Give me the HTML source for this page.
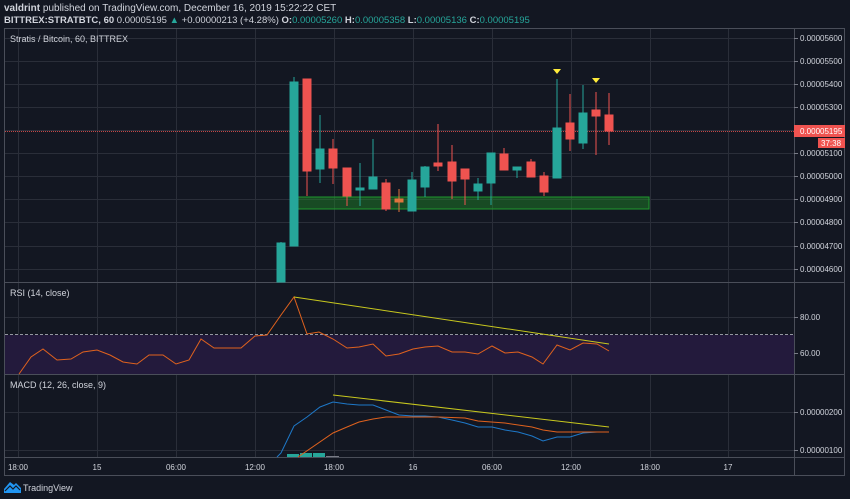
<!DOCTYPE html>
<html><head><meta charset="utf-8"><style>
html,body{margin:0;padding:0;background:#131722;width:850px;height:499px;overflow:hidden}
svg{display:block}
text{font-family:"Liberation Sans","DejaVu Sans",sans-serif}
</style></head><body>
<svg width="850" height="499" viewBox="0 0 850 499" xmlns="http://www.w3.org/2000/svg">
<rect width="850" height="499" fill="#131722"/>
<text x="4" y="11" font-size="10" fill="#d1d4dc"><tspan font-weight="bold">valdrint</tspan> published on TradingView.com, December 16, 2019 15:22:22 CET</text>
<text x="4" y="23" font-size="9.5" fill="#d1d4dc"><tspan font-weight="bold">BITTREX:STRATBTC, 60</tspan>  0.00005195 <tspan fill="#26a69a">▲</tspan> +0.00000213 (+4.28%) <tspan font-weight="bold">O:</tspan><tspan fill="#26a69a">0.00005260</tspan> <tspan font-weight="bold">H:</tspan><tspan fill="#26a69a">0.00005358</tspan> <tspan font-weight="bold">L:</tspan><tspan fill="#26a69a">0.00005136</tspan> <tspan font-weight="bold">C:</tspan><tspan fill="#26a69a">0.00005195</tspan></text>
<g stroke="#2a2e39" stroke-width="1">
<path d="M18.5 28V457M97.5 28V457M176.5 28V457M255.5 28V457M334.5 28V457M413.5 28V457M492.5 28V457M571.5 28V457M650.5 28V457M728.5 28V457"/>
<path d="M5 38.5H794M5 61.5H794M5 84.5H794M5 107.5H794M5 130.5H794M5 153.5H794M5 176.5H794M5 199.5H794M5 222.5H794M5 246.5H794M5 269.5H794"/>
<path d="M5 317.5H794M5 353.5H794M5 412.5H794M5 450.5H794"/>
</g>
<rect x="5" y="335" width="789" height="39" fill="#231a3c"/>
<path d="M5 334.5H794" stroke="#9598a1" stroke-dasharray="3 2" stroke-width="1"/>
<g stroke="#4a4e59" stroke-width="1" fill="none">
<rect x="4.5" y="28.5" width="840" height="447"/>
<path d="M794.5 28V475M5 282.5H845M5 374.5H845M5 457.5H845"/>
</g>
<rect x="294" y="197" width="355" height="12" fill="rgba(30,140,40,0.45)" stroke="#1f9a2e" stroke-width="1"/>
<path d="M5 131.5H794" stroke="#ef5350" stroke-dasharray="1 1" stroke-width="1" opacity="0.8"/>
<g stroke-width="1">
<g fill="#26a69a" stroke="#26a69a">
<line x1="281" y1="242" x2="281" y2="282"/><rect x="277" y="243" width="8" height="39"/>
<line x1="294" y1="77" x2="294" y2="246"/><rect x="290" y="82" width="8" height="164"/>
<line x1="320" y1="115" x2="320" y2="183"/><rect x="316" y="149" width="8" height="20"/>
<line x1="360" y1="163" x2="360" y2="206"/><rect x="356" y="188" width="8" height="2"/>
<line x1="373" y1="139" x2="373" y2="189"/><rect x="369" y="177" width="8" height="12"/>
<line x1="412" y1="172" x2="412" y2="211"/><rect x="408" y="180" width="8" height="31"/>
<line x1="425" y1="166" x2="425" y2="197"/><rect x="421" y="167" width="8" height="20"/>
<line x1="478" y1="178" x2="478" y2="200"/><rect x="474" y="184" width="8" height="7"/>
<line x1="491" y1="153" x2="491" y2="205"/><rect x="487" y="153" width="8" height="30"/>
<line x1="517" y1="167" x2="517" y2="178"/><rect x="513" y="167" width="8" height="3"/>
<line x1="557" y1="79" x2="557" y2="178"/><rect x="553" y="128" width="8" height="50"/>
<line x1="583" y1="85" x2="583" y2="149"/><rect x="579" y="113" width="8" height="30"/>
</g>
<g fill="#ef5350" stroke="#ef5350">
<line x1="307" y1="79" x2="307" y2="196"/><rect x="303" y="79" width="8" height="92"/>
<line x1="333" y1="139" x2="333" y2="184"/><rect x="329" y="149" width="8" height="19"/>
<line x1="347" y1="168" x2="347" y2="206"/><rect x="343" y="168" width="8" height="28"/>
<line x1="386" y1="179" x2="386" y2="211"/><rect x="382" y="183" width="8" height="26"/>
<line x1="438" y1="124" x2="438" y2="171"/><rect x="434" y="163" width="8" height="3"/>
<line x1="452" y1="145" x2="452" y2="199"/><rect x="448" y="162" width="8" height="19"/>
<line x1="465" y1="169" x2="465" y2="205"/><rect x="461" y="169" width="8" height="10"/>
<line x1="504" y1="148" x2="504" y2="170"/><rect x="500" y="154" width="8" height="16"/>
<line x1="531" y1="159" x2="531" y2="177"/><rect x="527" y="162" width="8" height="15"/>
<line x1="544" y1="172" x2="544" y2="196"/><rect x="540" y="176" width="8" height="16"/>
<line x1="570" y1="94" x2="570" y2="151"/><rect x="566" y="123" width="8" height="16"/>
<line x1="596" y1="92" x2="596" y2="155"/><rect x="592" y="110" width="8" height="6"/>
<line x1="609" y1="93" x2="609" y2="145"/><rect x="605" y="115" width="8" height="16"/>
</g>
<g fill="#e0743e" stroke="#e0743e"><line x1="399" y1="189" x2="399" y2="212"/><rect x="395" y="199" width="8" height="3"/></g>
</g>
<path d="M553 69H561L557 74Z M592 78H600L596 83Z" fill="#ffeb3b"/>
<text x="10" y="42" font-size="9" fill="#d1d4dc">Stratis / Bitcoin, 60, BITTREX</text>
<text x="10" y="296" font-size="9" fill="#d1d4dc">RSI (14, close)</text>
<text x="10" y="388" font-size="9" fill="#d1d4dc">MACD (12, 26, close, 9)</text>
<polyline fill="none" stroke="#e0621e" stroke-width="1" points="19,374 31,357 43,349 57,360 71,359 83,352 97,350 110,355 123,362 137,364 149,355 163,355 176,364 189,360 201,339 214,348 228,348 241,348 255,336 267,335 281,315 294,297 307,334 319,332 333,339 347,348 359,347 373,344 386,356 399,354 413,349 425,347 438,346 452,352 465,352 478,354 492,346 505,353 518,352 532,357 543,364 557,345 570,350 583,343 597,344 609,351"/>
<line x1="294" y1="297" x2="609" y2="344" stroke="#c8c81e" stroke-width="1"/>
<g fill="#26a69a"><rect x="287" y="454" width="12" height="3"/><rect x="300" y="453" width="12" height="4"/><rect x="313" y="453" width="12" height="4"/></g>
<rect x="326" y="456" width="13" height="1" fill="#787b86"/>
<polyline fill="none" stroke="#1e78c8" stroke-width="1" points="277,457 281,453 294,426 307,417 320,407 333,402 347,404 359,405 373,405 386,410 399,415 413,416 425,416 438,417 452,420 465,423 478,427 492,427 505,430 518,432 532,436 543,441 557,437 570,437 583,433 597,432 609,432"/>
<polyline fill="none" stroke="#e0621e" stroke-width="1" points="298,457 333,433 347,427 359,422 373,419 386,417 413,417 438,417 465,418 478,421 505,423 532,427 543,430 557,432 570,432 609,432"/>
<line x1="333" y1="395" x2="609" y2="427" stroke="#c8c81e" stroke-width="1"/>
<g font-size="8" fill="#d1d4dc">
<g stroke="#787b86"><path d="M794 38.5h4M794 61.5h4M794 84.5h4M794 107.5h4M794 153.5h4M794 176.5h4M794 199.5h4M794 222.5h4M794 246.5h4M794 269.5h4M794 317.5h4M794 353.5h4M794 412.5h4M794 450.5h4"/></g>
<text x="800" y="41">0.00005600</text><text x="800" y="64">0.00005500</text><text x="800" y="87">0.00005400</text><text x="800" y="110">0.00005300</text>
<text x="800" y="156">0.00005100</text><text x="800" y="179">0.00005000</text><text x="800" y="202">0.00004900</text><text x="800" y="225">0.00004800</text><text x="800" y="249">0.00004700</text><text x="800" y="272">0.00004600</text>
<text x="800" y="320">80.00</text><text x="800" y="356">60.00</text>
<text x="800" y="415">0.00000200</text><text x="800" y="453">0.00000100</text>
</g>
<rect x="794" y="125" width="51" height="12" fill="#ef5350"/>
<text x="800" y="134" font-size="8" fill="#fff">0.00005195</text>
<rect x="818" y="138" width="27" height="10" fill="#ef5350"/>
<text x="821" y="146" font-size="8" fill="#fff">37:38</text>
<g font-size="8" fill="#d1d4dc" text-anchor="middle">
<text x="18" y="470">18:00</text><text x="97" y="470">15</text><text x="176" y="470">06:00</text><text x="255" y="470">12:00</text><text x="334" y="470">18:00</text><text x="413" y="470">16</text><text x="492" y="470">06:00</text><text x="571" y="470">12:00</text><text x="650" y="470">18:00</text><text x="728" y="470">17</text>
</g>
<path d="M4 493 L4 489 L10 482 L14 485 L16 483 L21 488 L21 493 Z" fill="#2196f3"/>
<path d="M5 491 L10 486 L13 489 L16 486 L20 490" fill="none" stroke="#131722" stroke-width="1.2"/>
<text x="23" y="491" font-size="9" fill="#d1d4dc">TradingView</text>
</svg>
</body></html>
